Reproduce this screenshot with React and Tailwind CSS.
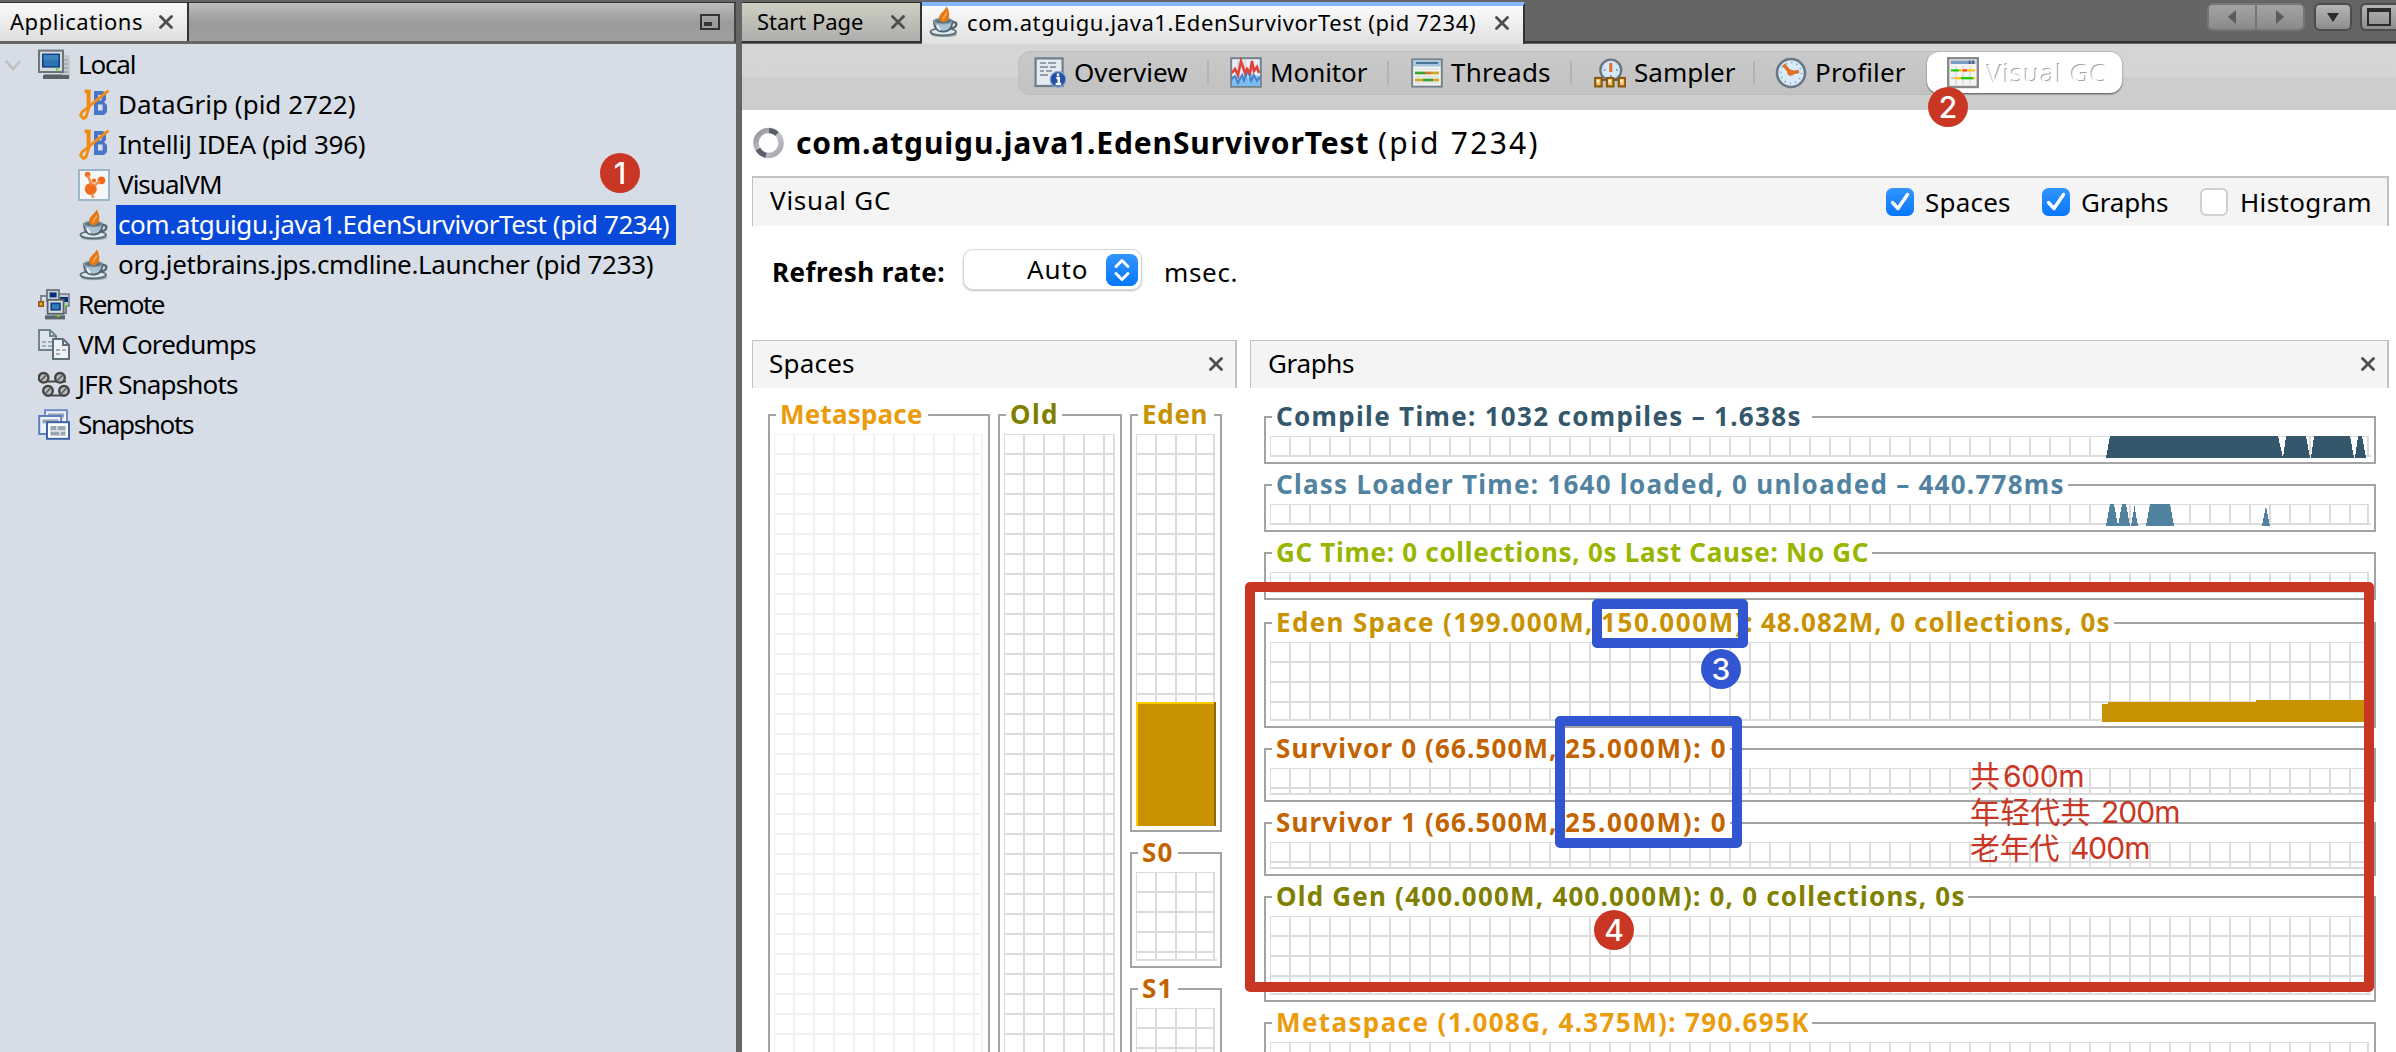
import React, { useLayoutEffect, useRef, useState } from "react";

/* Single-line label that tracks its letters out or in to span a given width. */
function T({ w, children, className = "" }) {
  const ref = useRef(null);
  const [ls, setLs] = useState(0);
  useLayoutEffect(() => {
    const n = ref.current.textContent.length;
    ref.current.style.letterSpacing = "0px";
    const natural = ref.current.getBoundingClientRect().width;
    const next = (w + 1.5 - natural) / Math.max(1, n - 1);
    ref.current.style.letterSpacing = next + "px";
    setLs(next);
  }, [w]);
  return (
    <span className={"block shrink-0 whitespace-nowrap indent-[-1px] " + className} style={{ width: w }}>
      <span ref={ref} style={{ letterSpacing: ls }}>{children}</span>
    </span>
  );
}

function Close({ className = "" }) {
  return (
    <svg viewBox="0 0 14 14" className={"h-[14px] w-[14px] shrink-0 " + className}>
      <path d="M1.5 1.5 12.5 12.5M12.5 1.5 1.5 12.5" stroke="#4d4d4d" strokeWidth="2.8" strokeLinecap="round" />
    </svg>
  );
}

function Ico({ children, className = "" }) {
  return (
    <svg viewBox="0 0 16 16" className={"h-8 w-8 shrink-0 " + className} fill="none">
      {children}
    </svg>
  );
}

const LocalIcon = () => (
  <Ico>
    <rect x="11" y="3" width="5" height="12" fill="#c3c8cc" />
    <path d="M12 5.5h3M12 7.5h3M12 9.5h3M12 11.5h3" stroke="#8b9298" strokeWidth=".6" />
    <path d="M3 12.5h9v1.5H3z" fill="#8f979d" />
    <rect x="2.5" y="13" width="13" height="2" fill="#5a6268" />
    <rect x="0.5" y="0.8" width="12" height="10.7" fill="#d6d9db" stroke="#6c757c" />
    <rect x="2" y="2.3" width="9" height="7" fill="#0d3f87" />
    <rect x="2.8" y="3" width="7.4" height="5.6" fill="#2f74b4" />
    <rect x="2.8" y="3" width="7.4" height="2.4" fill="#4385be" />
    <rect x="9" y="9.6" width="1.2" height="1.2" fill="#66e000" />
  </Ico>
);

const JbIcon = () => (
  <Ico>
    <path d="M8 1h4.500l1.500 1.500v3l-1 1 1.500 1.500v3.500L13 13H8z" fill="#4a76c9" />
    <path d="M10 3h1.800v2.600H10zM10 7.800h2.300v3H10z" fill="#d6dde6" />
    <path d="M5.500 9.200 4 14 2.800 14.800 1.300 13.200l.6-1.600L4.600 9.500 9 5.800 15.200 .8" stroke="#f28c0f" strokeWidth="1.400" />
    <path d="M3.300 1.200h2V9.500" stroke="#f28c0f" strokeWidth="2" />
  </Ico>
);

const VisualVmIcon = () => (
  <Ico>
    <rect x=".5" y=".5" width="15" height="15" fill="#f5f7f9" stroke="#9db6c8" />
    <circle cx="6.400" cy="10" r="3" fill="#f26b1d" />
    <circle cx="4.800" cy="2.800" r="1.400" fill="#f26b1d" />
    <circle cx="11.700" cy="5.700" r="1.900" fill="#f26b1d" />
    <circle cx="8" cy="5.800" r="1.100" fill="#f26b1d" />
    <path d="M4.800 3l2 5M11 6 8 8.500M7 12l.5 2.500" stroke="#f58a4a" strokeWidth="1.200" />
  </Ico>
);

const JavaIcon = ({ className = "" }) => (
  <Ico className={className}>
    <ellipse cx="8" cy="14.200" rx="6.600" ry="1.400" fill="#9aa5ac" />
    <ellipse cx="7.600" cy="12.900" rx="6.400" ry="1.800" fill="#dbe6ec" stroke="#5b6b75" strokeWidth=".9" />
    <path d="M3 7.400c0 3 1.200 5.400 4.600 5.400s4.600-2.400 4.600-5.400z" fill="#a9c3d2" stroke="#55656f" strokeWidth=".9" />
    <ellipse cx="7.600" cy="7.500" rx="4.600" ry="1.500" fill="#5d7482" stroke="#8fa3af" strokeWidth=".6" />
    <path d="M12.200 8.200c2.600-.8 3 2.600-1 3" stroke="#55656f" strokeWidth="1.200" />
    <path d="M4.600 9.700c.3 1 .9 1.800 1.600 2.200" stroke="#e9f3f8" strokeWidth="1" />
    <path d="M9.300 0C9.400 1.800 5.200 3.800 5.500 6.300c.2 1.200 1.200 1.900 2.400 1.800C11 7.600 11.500 3.900 9.300 0z" fill="#e67818" />
    <path d="M7.400 6.800c.2-1.600 1.800-2.200 2-3.600" stroke="#f7b05a" strokeWidth=".7" />
  </Ico>
);

const RemoteIcon = () => (
  <Ico>
    <path d="M1.500 7V3.500H5M14 8v4h-2" stroke="#7d868c" strokeWidth="1" />
    <rect x="9.500" y="2.500" width="6" height="6" fill="#c5cacd" stroke="#7a8288" strokeWidth=".8" />
    <path d="M11 4h4v2.500h-4z" fill="#06307a" />
    <rect x="4.500" y=".5" width="6" height="5.500" fill="#d0d4d6" stroke="#6d757b" strokeWidth=".9" />
    <rect x="5.800" y="1.700" width="3.500" height="2.500" fill="#06307a" />
    <rect x="4.800" y="5.400" width="8" height="7" fill="#d6dadd" stroke="#59626a" strokeWidth=".9" />
    <rect x="6.200" y="6.800" width="5.200" height="4" fill="#0d3f87" />
    <rect x="7" y="7.600" width="3.600" height="2.400" fill="#3579ba" />
    <rect x="3.500" y="13.200" width="10" height="2" fill="#5d666c" />
    <rect x="9.500" y="13" width="1.200" height="1" fill="#66e000" />
    <rect x="13" y="8" width="1" height="1" fill="#66e000" />
    <rect x=".4" y="6.400" width="2.200" height="2.200" fill="#f0a63a" stroke="#8f5a10" strokeWidth=".8" />
  </Ico>
);

const DumpIcon = () => (
  <Ico>
    <path d="M.5 .5H6L9 3.500v7H.5z" fill="#dfe6eb" stroke="#72848f" />
    <path d="M6 .5v3h3" stroke="#72848f" />
    <path d="M2 6.500h2M5 6.500h2M2 8.500h2M5 8.500h2" stroke="#8a9aa5" strokeWidth=".8" />
    <path d="M7.500 5h5l3 3v7h-8z" fill="#eef2f5" stroke="#5d6f7b" />
    <path d="M12.500 5v3h3" stroke="#5d6f7b" />
    <path d="M9 10.500h2M12 10.500h2M9 12.500h2" stroke="#8a9aa5" strokeWidth=".8" />
  </Ico>
);

const JfrIcon = () => (
  <Ico>
    <path d="M2 6.200h12M4 13.200h10" stroke="#4a4a4a" strokeWidth="1" />
    {[[2.8, 4.4], [11, 4.4], [5, 10.9], [13, 10.9]].map(([x, y]) => (
      <g key={x + "-" + y}>
        <circle cx={x} cy={y} r="2.400" fill="#b9bcbf" stroke="#444" strokeWidth="1.200" />
        <path d={`M${x - 1.2} ${y + 1.2}l2.400-2.400`} stroke="#5a5a5a" strokeWidth=".8" />
      </g>
    ))}
  </Ico>
);

const SnapIcon = () => (
  <Ico>
    <rect x="3.500" y=".6" width="11" height="9" fill="#eef2f7" stroke="#6e8cc5" />
    <rect x="5" y="2.200" width="8" height="2" fill="#9aa6b1" />
    <rect x=".6" y="3.500" width="11" height="9" fill="#eef2f7" stroke="#5d7fc0" />
    <rect x="2.200" y="5.200" width="8" height="2" fill="#9aa6b1" />
    <rect x="4.500" y="6.600" width="11" height="8.300" fill="#fff" stroke="#3f62a5" />
    <path d="M6.200 8.500h7.600v4.800H6.200z" fill="#9aa6b1" />
    <path d="M6.200 11h7.600M9.500 8.500V11M11 11v2.300" stroke="#e4e9ee" strokeWidth=".7" />
  </Ico>
);

const OverviewIcon = () => (
  <Ico>
    <rect x=".8" y=".7" width="13.500" height="13.800" fill="#e3ebf1" stroke="#6e7f8b" strokeWidth="1.100" />
    <path d="M3 3h3M7 3h4M3 5h4M8 5h3M3 7h2M6 7h3M3 9h4" stroke="#93a0aa" strokeWidth=".9" />
    <circle cx="12" cy="11.200" r="3.900" fill="#2350a8" stroke="#8aa2d0" strokeWidth=".6" />
    <path d="M11.200 10.500h1.200v3M10.800 13.500h2.800M12 8.300v1.200" stroke="#fff" strokeWidth="1.200" />
  </Ico>
);

const MonitorIcon = () => (
  <Ico>
    <rect x=".6" y=".6" width="14.800" height="14.300" fill="#e9f0f5" stroke="#73828d" strokeWidth="1" />
    <path d="M4 1v7M7.500 1v7M11 1v7" stroke="#c9d2da" strokeWidth=".6" />
    <path d="M1 14.500V9l1.500 2L4 8l1.500 3L8 7l1 4 2-3 1.500 2 1.500-1 1 1v4.500z" fill="#7fbdf0" />
    <path d="M1 11l1.500-1.500L4 13l2-4 1 3 2-5 1.500 5 1.500-3 1.500 3 1.500-2" stroke="#3f80c8" strokeWidth=".9" />
    <path d="M1 8l1.500-2L4 9l1.500-7L7.500 8l1-2 1.500 2 1-6 1 5 1.500-2 1 3" stroke="#e0433a" strokeWidth="1.300" />
  </Ico>
);

const ThreadsIcon = () => (
  <Ico>
    <rect x=".6" y="1.200" width="14.800" height="13.600" fill="#f3f5f2" stroke="#77838b" strokeWidth="1" />
    <path d="M1 1.800h14v3H1z" fill="#a8c6dc" />
    <path d="M2.500 3h11" stroke="#44749a" strokeWidth="1" />
    <path d="M2 6h12M2 9.800h12M2 13h12" stroke="#d7dbd5" strokeWidth=".6" />
    <path d="M2 8h5" stroke="#3aa23a" strokeWidth="1.400" />
    <path d="M7 8h3" stroke="#cc7a3a" strokeWidth="1.400" />
    <path d="M10 8h4" stroke="#d6a62a" strokeWidth="1.400" />
    <path d="M2 11.500h4" stroke="#d6a62a" strokeWidth="1.400" />
    <path d="M6 11.500h5" stroke="#3aa23a" strokeWidth="1.400" />
    <path d="M11 11.500h3" stroke="#d6a62a" strokeWidth="1.400" />
  </Ico>
);

const SamplerIcon = () => (
  <Ico>
    <circle cx="8.400" cy="6.500" r="5.200" fill="#d6e8f7" stroke="#6a7784" strokeWidth="1.200" />
    <path d="M8.400 3v4.500" stroke="#e0702a" strokeWidth="1.500" />
    <path d="M4.800 6.500h1M11 6.500h1M8.400 9v1" stroke="#6f93b5" strokeWidth=".8" />
    <path d="M2 11.500h12" stroke="#6d4a10" strokeWidth=".8" />
    {[0.6, 6.5, 12.4].map((x) => (
      <g key={x}>
        <rect x={x} y="10.500" width="3.200" height="4.200" fill="#f3c36a" stroke="#8a5a0e" strokeWidth="1.100" />
        <rect x={x + 0.7} y="11.300" width="1.300" height="1.500" fill="#fdf0cf" />
      </g>
    ))}
  </Ico>
);

const ProfilerIcon = () => (
  <Ico>
    <circle cx="8" cy="8" r="7" fill="#d9eaf8" stroke="#6a7784" strokeWidth="1.300" />
    <circle cx="8" cy="8" r="5.200" stroke="#7fa6c8" strokeWidth=".9" strokeDasharray=".6 2.120" />
    <path d="M4.300 3.800 7.800 8l4.200-.8" stroke="#e0702a" strokeWidth="1.800" />
    <circle cx="7.800" cy="7.800" r="1.600" fill="#e0702a" />
  </Ico>
);

const GcIcon = () => (
  <Ico>
    <rect x=".6" y=".6" width="14.800" height="14.400" fill="#f4f4f4" stroke="#8a8a8a" strokeWidth="1.200" />
    <rect x="1.800" y="1.800" width="12.400" height="1.700" fill="#7c9ac6" />
    <path d="M11.300 1.800v1.700M13 1.800v1.700" stroke="#45597c" strokeWidth=".8" />
    <path d="M4.500 4.500v9.500M8 4.500v9.500M11.500 4.500v9.500" stroke="#cfcfcf" strokeWidth=".5" />
    <path d="M2 6.700h4" stroke="#22c400" strokeWidth="1.100" />
    <path d="M6 6.700h2M10 6.700h4" stroke="#ffc21a" strokeWidth="1.100" />
    <path d="M8 6.700h2" stroke="#ee3b1b" strokeWidth="1.100" />
    <path d="M2 10.600h2" stroke="#c8c8c8" strokeWidth="1.100" />
    <path d="M4 10.600h3M13 10.600h1" stroke="#ffc21a" strokeWidth="1.100" />
    <path d="M7 10.600h6" stroke="#22c400" strokeWidth="1.100" />
  </Ico>
);

/* Measurement grid: cells of 20px, hairline on the top and left edge. */
function Grid({ w, h, color = "#dcdcdc", children, edge = true }) {
  const xs = [];
  for (let x = 19; x < w - 3; x += 20) xs.push(x);
  const ys = [];
  for (let y = 19; y < h - 3; y += 20) ys.push(y);
  return (
    <svg width={w + 2} height={h + 1} className="mt-1 block shrink-0 overflow-visible" shapeRendering="crispEdges">
      <g fill={color}>
        <rect x="0" y="0" width={w} height="1" />
        <rect x="0" y="0" width="1" height={h} />
        {xs.map((x) => <rect key={"x" + x} x={x} y="0" width="2" height={h} />)}
        {ys.map((y) => <rect key={"y" + y} x="0" y={y} width={w} height="2" />)}
        <rect x={w - 2} y="0" width="2" height={h} />
        {edge && <rect x="0" y={h - 2} width={w + 2} height="2" />}
      </g>
      {children}
    </svg>
  );
}

/* Titled frame; `parts` is a list of [text, width] runs set side by side. */
function Box({ parts, lw, className, grid }) {
  return (
    <fieldset className={"min-w-0 shrink-0 overflow-visible border-2 border-[#a3a3a3] pl-1 " + className}>
      <legend className="ml-[2px] h-[30px] pl-[5px] leading-[28px] font-bold" style={{ width: lw }}>
        <span className="flex gap-[10px]">
          {parts.map(([text, w]) => <T key={text} w={w}>{text}</T>)}
        </span>
      </legend>
      {grid}
    </fieldset>
  );
}

function Check({ on }) {
  return on ? (
    <svg viewBox="0 0 28 28" className="h-7 w-7 shrink-0">
      <defs>
        <linearGradient id="ck" x1="0" y1="0" x2="0" y2="1">
          <stop offset="0" stopColor="#3395ff" />
          <stop offset="1" stopColor="#0677fb" />
        </linearGradient>
      </defs>
      <rect width="28" height="28" rx="6.500" fill="url(#ck)" />
      <path d="M6.500 14.500 12 20.500 21.500 6.500" fill="none" stroke="#fff" strokeWidth="3.400" strokeLinecap="round" strokeLinejoin="round" />
    </svg>
  ) : (
    <span className="h-7 w-7 shrink-0 rounded-[6px] border-2 border-[#cfcfcf] bg-white" />
  );
}

function Badge({ n, className }) {
  return (
    <div className={"absolute flex h-10 w-10 items-center justify-center rounded-full font-['Inter'] text-[30px] leading-none font-medium text-white " + className}>
      {n}
    </div>
  );
}

function TreeRow({ icon, label, w, child, selected }) {
  return (
    <div className={"flex h-10 items-center " + (child ? "pl-[78px]" : "pl-[38px]")}>
      {icon}
      <div className={"flex h-10 items-center pr-[7px] pb-[2px] " + (child ? "ml-[6px] pl-[3px] " : "ml-[9px] ") + (selected ? "bg-[#0849da] text-white" : "")}>
        <T w={w}>{label}</T>
      </div>
    </div>
  );
}

function Sidebar() {
  return (
    <div className="flex w-[736px] shrink-0 flex-col">
      <div className="flex h-[42px] shrink-0 border-t border-r-2 border-b-[3px] border-t-[#333] border-r-[#444] border-b-[#666] bg-linear-to-b from-[#bdbdbd] via-[#9b9b9b] to-[#9f9f9f]">
        <div className="flex w-[189px] items-center border-r-2 border-[#333] bg-linear-to-b from-[#fafafa] to-[#dedede] pl-[11px] text-[22px]">
          <T w={131} className="-mt-[1px]">Applications</T>
          <Close className="ml-[17px]" />
        </div>
        <svg viewBox="0 0 20 16" className="mt-[11px] mr-[14px] ml-auto h-4 w-5" fill="none">
          <rect x="1" y="1" width="18" height="14" stroke="#333" strokeWidth="2" />
          <rect x="4" y="8" width="8" height="4" fill="#333" />
        </svg>
      </div>
      <div className="relative flex-1 bg-[#d6dde6] pt-[1px] text-[26px]">
        <svg viewBox="0 0 18 12" className="absolute top-[15px] left-[4px] h-3 w-[18px]" fill="none">
          <path d="M2 2l7 8 7-8" stroke="#bfbfbf" strokeWidth="2.600" />
        </svg>
        <TreeRow icon={<LocalIcon />} label="Local" w={57} />
        <TreeRow child icon={<JbIcon />} label="DataGrip (pid 2722)" w={236} />
        <TreeRow child icon={<JbIcon />} label="IntelliJ IDEA (pid 396)" w={246} />
        <TreeRow child icon={<VisualVmIcon />} label="VisualVM" w={103} />
        <TreeRow child selected icon={<JavaIcon />} label="com.atguigu.java1.EdenSurvivorTest (pid 7234)" w={550} />
        <TreeRow child icon={<JavaIcon />} label="org.jetbrains.jps.cmdline.Launcher (pid 7233)" w={534} />
        <TreeRow icon={<RemoteIcon />} label="Remote" w={86} />
        <TreeRow icon={<DumpIcon />} label="VM Coredumps" w={177} />
        <TreeRow icon={<JfrIcon />} label="JFR Snapshots" w={159} />
        <TreeRow icon={<SnapIcon />} label="Snapshots" w={115} />
      </div>
    </div>
  );
}

function TabStrip() {
  return (
    <div className="flex h-[42px] shrink-0 bg-[#656565] text-[22px]">
      <div className="flex h-[41px] w-[180px] items-center border-t border-r-2 border-b-2 border-[#333] bg-linear-to-b from-[#cfcfc2] to-[#adadad] pl-4">
        <T w={105} className="-mt-[1px]">Start Page</T>
        <Close className="ml-7" />
      </div>
      <div className="flex h-[42px] w-[603px] items-center border-t-4 border-r-2 border-t-[#84b8f9] border-r-[#333] bg-linear-to-b from-[#fbfbfb] to-[#e0e0e0] pl-[6px]">
        <JavaIcon className="-mt-[6px]" />
        <T w={507} className="-mt-[6px] ml-[8px]">com.atguigu.java1.EdenSurvivorTest (pid 7234)</T>
        <Close className="-mt-[4px] ml-5" />
      </div>
      <div className="flex h-[41px] flex-1 justify-end border-b-2 border-[#333] pt-[1px]">
        <div className="flex h-7 w-[98px] rounded-md border-2 border-[#777] bg-linear-to-b from-[#a3a3a3] to-[#8a8a8a]">
          <div className="flex flex-1 items-center justify-center border-r-2 border-[#777]">
            <svg viewBox="0 0 8 14" className="h-[14px] w-2"><path d="M8 0v14L0 7z" fill="#5c5c5c" /></svg>
          </div>
          <div className="flex flex-1 items-center justify-center">
            <svg viewBox="0 0 8 14" className="h-[14px] w-2"><path d="M0 0v14l8-7z" fill="#5c5c5c" /></svg>
          </div>
        </div>
        <div className="ml-[9px] flex h-7 w-[38px] items-center justify-center rounded-md border-2 border-[#4c4c4c] bg-linear-to-b from-[#b5b5b5] to-[#8e8e8e]">
          <svg viewBox="0 0 12 9" className="h-[9px] w-3"><path d="M0 0h12L6 9z" fill="#2b2b2b" /></svg>
        </div>
        <div className="ml-[8px] h-7 w-[36px] rounded-l-md border-2 border-r-0 border-[#4c4c4c] bg-linear-to-b from-[#b5b5b5] to-[#8e8e8e] pt-[3px] pl-[5px]">
          <div className="h-[18px] w-6 border-2 border-t-4 border-[#2b2b2b]" />
        </div>
      </div>
    </div>
  );
}

function Tool({ icon, label, w, className = "" }) {
  return (
    <div className={"flex items-center " + className}>
      {icon}
      <T w={w} className="-mt-[2px] ml-[9px]">{label}</T>
    </div>
  );
}

const Sep = ({ className }) => <div className={"h-6 w-[2px] shrink-0 bg-[#b3b3b3] " + className} />;

function Toolbar() {
  return (
    <div className="flex h-[66px] shrink-0 bg-linear-to-b from-[#d5d5d5] from-50% to-[#cdcdcd] to-50% pt-[7px] pl-[276px]">
      <div className="flex h-11 w-[1104px] items-center rounded-xl border border-[#bebebe] bg-linear-to-b from-[#c9c9c9] to-[#c2c2c2] pl-[15px]">
        <Tool icon={<OverviewIcon />} label="Overview" w={112} />
        <Sep className="ml-[20px]" />
        <Tool icon={<MonitorIcon />} label="Monitor" w={96} className="ml-[21px]" />
        <Sep className="ml-[20px]" />
        <Tool icon={<ThreadsIcon />} label="Threads" w={98} className="ml-[22px]" />
        <Sep className="ml-5" />
        <Tool icon={<SamplerIcon />} label="Sampler" w={100} className="ml-[22px]" />
        <Sep className="ml-[18px]" />
        <Tool icon={<ProfilerIcon />} label="Profiler" w={89} className="ml-[20px]" />
        <div className="-mt-[1px] ml-[22px] flex h-[41px] w-[195px] shrink-0 items-center rounded-xl bg-white pl-5 shadow-[0_1px_2px_rgba(0,0,0,0.55)]">
          <GcIcon />
          <T w={118} className="mt-[1px] ml-[9px] text-white [text-shadow:-1px_-1px_0_#a4a4a4]">Visual GC</T>
        </div>
      </div>
    </div>
  );
}

function PanelHeader({ title, w, children, className = "" }) {
  return (
    <div className={"flex shrink-0 items-center border-t border-r-2 border-l border-[#c2c2c2] bg-[#f4f4f4] text-[26px] " + className}>
      <T w={w} className="-mt-[3px]">{title}</T>
      {children}
    </div>
  );
}

function Spaces() {
  return (
    <div className="flex w-[485px] shrink-0 flex-col">
      <PanelHeader title="Spaces" w={84} className="h-[48px] pl-[17px]">
        <Close className="mr-[12px] mb-[2px] ml-auto" />
      </PanelHeader>
      <div className="flex gap-2 pt-3 pl-4">
        <Box parts={[["Metaspace", 141]]} lw={152} className="h-[700px] w-[222px] text-[#eb9c0c]" grid={<Grid w={209} h={660} color="#f1f1f1" edge={false} />} />
        <Box parts={[["Old", 46]]} lw={56} className="h-[700px] w-[124px] text-[#7f7f00]" grid={<Grid w={111} h={660} edge={false} />} />
        <div className="flex flex-col gap-[6px]">
          <Box parts={[["Eden", 64]]} lw={76} className="h-[432px] w-[92px] text-[#c89200]" grid={
            <Grid w={79} h={390} edge={false}>
              <g shapeRendering="crispEdges">
                <rect x="0" y="268" width="80" height="124" fill="#c89200" />
                <rect x="0" y="268" width="78" height="2" fill="#ffcc00" />
                <rect x="0" y="268" width="2" height="124" fill="#ffcc00" />
                <rect x="78" y="268" width="2" height="124" fill="#906800" />
              </g>
            </Grid>
          } />
          <Box parts={[["S0", 29]]} lw={40} className="h-[130px] w-[92px] text-[#c26300]" grid={<Grid w={79} h={89} />} />
          <Box parts={[["S1", 29]]} lw={40} className="h-[130px] w-[92px] text-[#c26300]" grid={<Grid w={79} h={89} />} />
        </div>
      </div>
    </div>
  );
}

function Graphs() {
  return (
    <div className="ml-[13px] flex w-[1139px] shrink-0 flex-col">
      <PanelHeader title="Graphs" w={85} className="h-[48px] pl-[18px]">
        <Close className="mr-[12px] mb-[2px] ml-auto" />
      </PanelHeader>
      <div className="flex w-[1126px] flex-col pt-[14px] pl-[14px]">
        <Box parts={[["Compile Time: 1032 compiles – 1.638s", 523]]} lw={540} className="h-[62px] text-[#34576b]" grid={
          <Grid w={1099} h={21}>
            <path fill="#34576b" d="M836 22l4-22H1008l5 22zM1013 22l3-22h20l4 22zM1041 22l3-22h36l4 22zM1085 22l3-22h4l4 22z" />
          </Grid>
        } />
        <Box parts={[["Class Loader Time: 1640 loaded, 0 unloaded – 440.778ms", 786]]} lw={796} className="mt-[6px] h-[62px] text-[#5183a0]" grid={
          <Grid w={1099} h={21}>
            <path fill="#5183a0" d="M836 22l4-22h4l4 22zM848 22l4-22h4l4 22zM861 22l3.500-20 3.500 20zM876 22l4-22h20l4 22zM992 22l4-20 4 20z" />
          </Grid>
        } />
        <Box parts={[["GC Time: 0 collections, 0s Last Cause: No GC", 591]]} lw={600} className="mt-[6px] h-[62px] text-[#98b500]" grid={<Grid w={1099} h={21} />} />
        <Box parts={[["Eden Space (199.000M,", 315], ["150.000M):", 150], ["48.082M, 0 collections, 0s", 347]]} lw={842} className="mt-2 h-[120px] text-[#c89200]" grid={
          <Grid w={1099} h={79}>
            <path fill="#c89200" d="M832 80V62h6v-2h148v-2h110v22z" />
          </Grid>
        } />
        <Box parts={[["Survivor 0 (66.500M,", 279], ["25.000M): 0", 159]]} lw={458} className="mt-[6px] h-[68px] text-[#c26300]" grid={<Grid w={1099} h={27} />} />
        <Box parts={[["Survivor 1 (66.500M,", 279], ["25.000M): 0", 159]]} lw={458} className="mt-[6px] h-[68px] text-[#c26300]" grid={<Grid w={1099} h={27} />} />
        <Box parts={[["Old Gen (400.000M, 400.000M): 0, 0 collections, 0s", 687]]} lw={696} className="mt-[6px] h-[120px] text-[#7f7f00]" grid={<Grid w={1099} h={79} />} />
        <Box parts={[["Metaspace (1.008G, 4.375M): 790.695K", 531]]} lw={540} className="mt-[6px] h-[120px] text-[#eb9c0c]" grid={<Grid w={1099} h={79} />} />
      </div>
    </div>
  );
}

function Annotations() {
  return (
    <>
      <Badge n="1" className="top-[153px] left-[600px] bg-[#c93624]" />
      <Badge n="2" className="top-[87px] left-[1928px] bg-[#c93624]" />
      <Badge n="3" className="top-[649px] left-[1701px] bg-[#3256d1]" />
      <Badge n="4" className="top-[910px] left-[1594px] bg-[#c93624]" />
      <div className="absolute top-[582px] left-[1245px] h-[410px] w-[1129px] rounded-[5px] border-[10px] border-[#c93624]" />
      <div className="absolute top-[599px] left-[1592px] h-[49px] w-[156px] rounded-[5px] border-[10px] border-[#3256d1]" />
      <div className="absolute top-[716px] left-[1555px] h-[132px] w-[187px] rounded-[5px] border-[10px] border-[#3256d1]" />
      <div className="absolute top-[758px] left-[1971px] font-['Inter','Noto_Sans_CJK_SC',sans-serif] text-[30px] leading-[36px] whitespace-pre text-[#c93624]">
        <div className="flex h-9 gap-[5px]"><T w={28}>共</T><T w={80}>600m</T></div>
        <div className="flex h-9 gap-[12px]"><T w={119}>年轻代共</T><T w={78}>200m</T></div>
        <div className="flex h-9 gap-[12px]"><T w={88}>老年代</T><T w={79}>400m</T></div>
      </div>
    </>
  );
}

export default function App() {
  return (
    <div className="relative flex h-[1052px] w-[2396px] flex-col overflow-hidden bg-[#656565] pt-[2px] font-['Noto_Sans',sans-serif] text-[26px] text-black">
      <div className="flex min-h-0 flex-1">
        <Sidebar />
        <div className="ml-[6px] flex min-w-0 flex-1 flex-col overflow-hidden bg-white">
          <TabStrip />
          <Toolbar />
          <div className="flex h-[66px] shrink-0 items-center pl-[11px] text-[30px]">
            <svg viewBox="0 0 32 32" className="h-8 w-8" fill="none">
              <defs>
                <linearGradient id="spin" x1="0" y1="0" x2="1" y2="1">
                  <stop offset="0" stopColor="#8b8e94" />
                  <stop offset=".5" stopColor="#c6c8cd" />
                  <stop offset="1" stopColor="#a0a3a9" />
                </linearGradient>
              </defs>
              <circle cx="15.500" cy="16" r="12.500" stroke="url(#spin)" strokeWidth="5.500" />
              <path d="M16 3.500a12.500 12.500 0 0 1 8 3.500M5 22a12.500 12.500 0 0 0 8 6.300" stroke="#5b5f68" strokeWidth="5" />
            </svg>
            <T w={571} className="-mt-[2px] ml-[12px] font-bold">com.atguigu.java1.EdenSurvivorTest</T>
            <T w={158} className="-mt-[2px] ml-[11px]">(pid 7234)</T>
          </div>
          <PanelHeader title="Visual GC" w={119} className="mr-[7px] ml-[10px] h-[50px] border-t-2 pl-[18px]">
            <div className="mr-[16px] ml-auto flex items-center">
              <Check on />
              <T w={84} className="ml-3">Spaces</T>
              <div className="ml-8"><Check on /></div>
              <T w={86} className="ml-3">Graphs</T>
              <div className="ml-8 flex"><Check /></div>
              <T w={130} className="ml-[13px]">Histogram</T>
            </div>
          </PanelHeader>
          <div className="flex h-[114px] shrink-0 items-start pt-[23px] pl-[31px]">
            <T w={171} className="mt-[3px] leading-10 font-bold">Refresh rate:</T>
            <div className="ml-[19px] flex h-[41px] w-[179px] items-center rounded-[10px] border border-[#d6d6d6] bg-white pl-[64px] shadow-[0_1px_2px_rgba(0,0,0,0.25)]">
              <T w={59}>Auto</T>
              <svg viewBox="0 0 32 32" className="ml-[19px] h-8 w-8 shrink-0" fill="none">
                <rect width="32" height="32" rx="7.500" fill="url(#ck)" />
                <path d="M10 12.500l6-6 6 6M10 19.500l6 6 6-6" stroke="#fff" strokeWidth="3" strokeLinecap="round" strokeLinejoin="round" />
              </svg>
            </div>
            <T w={72} className="mt-[3px] ml-[23px] leading-10">msec.</T>
          </div>
          <div className="flex shrink-0 pl-[10px]">
            <Spaces />
            <Graphs />
          </div>
        </div>
      </div>
      <Annotations />
    </div>
  );
}
